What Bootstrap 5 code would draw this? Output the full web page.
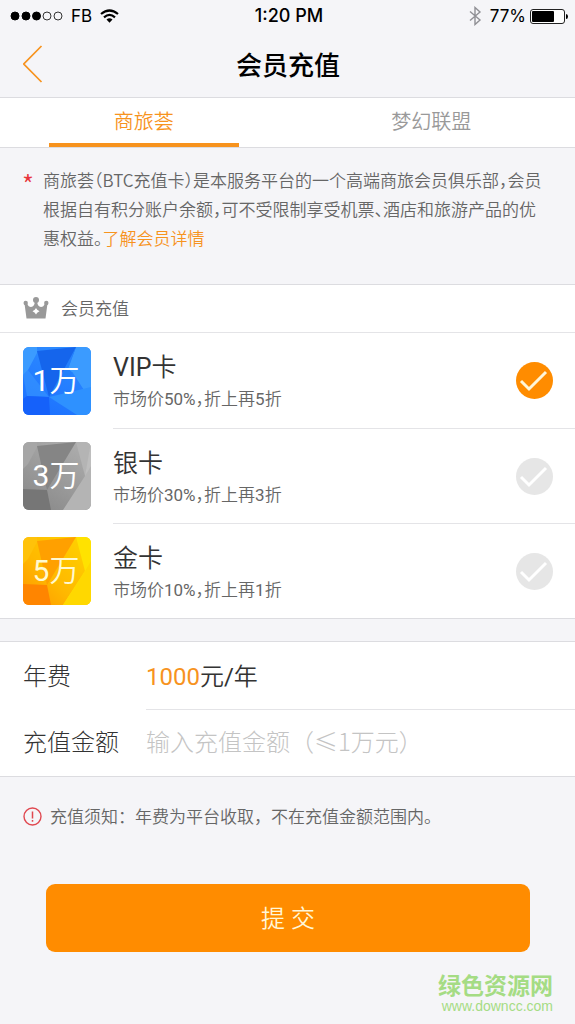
<!DOCTYPE html>
<html lang="zh-CN">
<head>
<meta charset="utf-8">
<meta name="viewport" content="width=device-width, initial-scale=1">
<title>会员充值</title>
<link href="https://cdn.jsdelivr.net/npm/bootstrap@5.3.0/dist/css/bootstrap.min.css" rel="stylesheet">
<style>
  :root { --accent: #ff8c00; --rule: #dcdce0; }
  body { background: #f5f5f8; color: #333; font-family: Roboto, "Noto Sans CJK SC", sans-serif; }
  .cjk { font-family: "Noto Sans CJK SC", sans-serif; }
  .light { font-weight: 300; }
  .demi { font-weight: 350; }
  .latin { font-weight: 400; }
  .half { font-feature-settings: "halt"; }
  .accent, .accent:hover { color: #f7931e; }
  .gutter { padding-left: 23px; padding-right: 22px; }

  .status-bar { height: 32px; padding: 0 7px 0 10px; color: #000; font: 400 17px/32px Inter, sans-serif; }
  .status-bar .carrier, .status-bar .power { flex: 1 1 0; }
  .status-bar .clock { font-size: 18px; font-weight: 500; }
  .title-bar { height: 66px; padding-bottom: 2px; border-bottom: 1px solid var(--rule); }
  .title-bar h1 { font-size: 26px; line-height: 40px; font-weight: 500; color: #000; }
  .side { width: 24px; }

  .tabs { background: #fff; border-bottom: 1px solid var(--rule); }
  .tabs .nav-link { height: 49px; padding: 0; font-size: 20px; line-height: 46px; color: #999; border-radius: 0; }
  .tabs .nav-link.active { color: #f7931e; background: linear-gradient(#f7931e, #f7931e) center bottom / 66% 4px no-repeat; }

  .intro { padding: 17px 28px 32px 22px; font-size: 17px; line-height: 29px; color: #666; }
  .intro .star { width: 21px; flex: none; color: #e8343c; font-size: 26px; line-height: 38px; }

  .panel { background: #fff; border-top: 1px solid var(--rule); border-bottom: 1px solid var(--rule); }
  .panel-head { height: 48px; padding-bottom: 2px; font-size: 17px; color: #666; border-bottom: 1px solid #e4e4e7; }
  .plan { height: 95px; padding-left: 23px; cursor: pointer; }
  .tile { width: 68px; height: 68px; flex: none; }
  .plan-body { margin-left: 22px; padding-right: 22px; }
  .plan + .plan .plan-body { border-top: 1px solid #e4e4e7; }
  .plan-name { padding-top: 2px; font-size: 25px; line-height: 36px; }
  .plan-note { font-size: 17px; line-height: 27px; color: #666; }
  .pick.form-check-input { width: 37px; height: 37px; margin: 0; border: 0; background-color: #e6e6e6; background-size: 100% 100%;
    background-image: url("data:image/svg+xml,%3Csvg xmlns='http://www.w3.org/2000/svg' viewBox='0 0 37 37'%3E%3Cpath d='M5 19l8 8L30 10' fill='none' stroke='%23fff' stroke-width='3'/%3E%3C/svg%3E"); }
  .pick.form-check-input:checked { background-color: var(--accent);
    background-image: url("data:image/svg+xml,%3Csvg xmlns='http://www.w3.org/2000/svg' viewBox='0 0 37 37'%3E%3Cpath d='M5 19l8 8L30 10' fill='none' stroke='%23fff6d8' stroke-width='3'/%3E%3C/svg%3E"); }

  .fees { margin-top: 22px; font-size: 24px; }
  .fee-row { height: 67px; padding-left: 23px; }
  .fee-row:first-child { padding-top: 2px; }
  .fee-label { width: 123px; flex: none; }
  .fee-row + .fee-row .fee-value { border-top: 1px solid #e4e4e7; }
  .fee-input.form-control { padding: 0 0 4px; border: 0; border-radius: 0; box-shadow: none; background: none; font-size: 24px; line-height: 36px; color: #333; }
  .fee-input.form-control::placeholder { color: #c4c4c4; opacity: 1; }

  .notice { padding-top: 24px; padding-bottom: 1px; font-size: 17px; line-height: 30px; color: #666; }
  .submit-wrap { padding: 52px 45px 0 46px; }
  .submit.btn { height: 68px; padding-top: 8px; border: 0; border-radius: 9px; background: var(--accent); color: #fff6d8; font-size: 24px; }
  .brand { padding: 17px 22px 0; color: #a5dc84; }
  .brand-name { font-size: 23px; line-height: 30px; font-weight: 700; }
  .brand-site { font: 14px/14px "Liberation Sans", sans-serif; color: #a5dc84; }
</style>
</head>
<body>
<header>
  <div class="status-bar d-flex align-items-center">
    <div class="carrier d-flex align-items-center">
      <svg width="53" height="10" viewBox="0 0 53 10" aria-hidden="true">
        <g stroke="#000"><circle cx="5" cy="5" r="4"/><circle cx="16" cy="5" r="4"/><circle cx="26.500" cy="5" r="4"/></g>
        <g fill="none" stroke="#333"><circle cx="37" cy="5" r="4"/><circle cx="48" cy="5" r="4"/></g>
      </svg>
      <span class="ms-1 ps-1">FB</span>
      <svg width="19" height="14" viewBox="0 0 19 14" class="ms-2" aria-hidden="true">
        <g fill="none" stroke="#000" stroke-width="2.200"><path d="M1 5Q9.500-2 18 5"/><path d="M4 8.300Q9.500 3.500 15 8.300"/></g>
        <path d="M6.500 10.500Q9.500 8 12.500 10.500L9.500 13.800z"/>
      </svg>
    </div>
    <span class="clock">1:20 PM</span>
    <div class="power d-flex align-items-center justify-content-end">
      <svg width="13" height="20" viewBox="0 0 13 20" class="me-2" aria-hidden="true"><path d="M1 5.500l10 8.500-5 4.500V1.500L11 6 1 14.500" fill="none" stroke="#909095" stroke-width="1.400"/></svg>
      <span>77%</span>
      <svg width="38" height="15" viewBox="0 0 38 15" class="ms-1" aria-hidden="true"><rect x=".5" y=".5" width="34" height="14" rx="2.500" fill="#fff" stroke="#222"/><rect x="2" y="2" width="22" height="11" rx="1"/><path d="M36 5q2 0 2 2.500T36 10z"/></svg>
    </div>
  </div>
  <div class="title-bar gutter d-flex align-items-center justify-content-between">
    <a href="#" class="side d-flex" aria-label="返回"><svg width="20" height="38" viewBox="0 0 20 38"><path d="M18.500 1L.8 19l17.700 18" fill="none" stroke="#f7931e" stroke-width="1.700"/></svg></a>
    <h1 class="cjk m-0">会员充值</h1>
    <span class="side"></span>
  </div>
</header>

<nav class="tabs nav nav-fill nav-justified cjk demi">
  <a class="nav-link active" aria-current="page" href="#">商旅荟</a>
  <a class="nav-link" href="#">梦幻联盟</a>
</nav>

<main>
  <section class="intro cjk demi d-flex">
    <span class="star">*</span>
    <p class="half m-0">商旅荟（BTC充值卡）是本服务平台的一个高端商旅会员俱乐部，会员根据自有积分账户余额，可不受限制享受机票、酒店和旅游产品的优惠权益。<a href="#" class="accent text-decoration-none">了解会员详情</a></p>
  </section>

  <form>
    <section class="panel">
      <div class="panel-head gutter d-flex align-items-center cjk demi">
        <svg width="26" height="22" viewBox="0 0 26 22" aria-hidden="true">
          <g fill="#999"><circle cx="2.700" cy="6" r="2.200"/><circle cx="23.300" cy="6" r="2.200"/><circle cx="13" cy="3" r="3"/>
          <path fill-rule="evenodd" d="M1.500 6.500L4 6.500q1.500 3.500 4 3.500Q11.500 9.500 11.800 5h2.400q.3 4.500 3.800 5 2.500 0 4-3.500l2.500 0L22.500 21.500h-19zM13 11l-1.200 1.800L9.500 14.300l2.300 1.500L13 17.600l1.200-1.800 2.300-1.500-2.300-1.500z"/></g>
        </svg>
        <span class="ms-2 ps-1">会员充值</span>
      </div>

      <label class="plan d-flex align-items-center" for="plan-vip">
        <svg class="tile" viewBox="0 0 68 68">
          <defs>
            <clipPath id="tile-shape"><rect width="68" height="68" rx="6"/></clipPath>
            <linearGradient id="blue" x1=".7" y1="0" x2=".3" y2="1"><stop stop-color="#2d8cff"/><stop offset="1" stop-color="#1d72ff"/></linearGradient>
            <linearGradient id="grey" x1=".8" y1="0" x2=".2" y2="1"><stop stop-color="#adadad"/><stop offset="1" stop-color="#8a8a8a"/></linearGradient>
            <linearGradient id="gold" x1="1" y1="0" x2="0" y2="1"><stop stop-color="#ffd400"/><stop offset=".6" stop-color="#ffb800"/><stop offset="1" stop-color="#ff9500"/></linearGradient>
          </defs>
          <g clip-path="url(#tile-shape)">
            <path fill="url(#blue)" d="M0 0h68v68H0z"/>
            <path fill="#3b9bff" d="M0 0h14v6L5 23 0 28zM53 0h15v54L50 26 45 22z"/>
            <path fill="#1565ec" d="M14 4L53 0 42 26 26 50z"/>
            <path fill="#2580fb" d="M26 50L53 0l-8 22 5 4z"/>
            <path fill="#3c9bff" fill-opacity=".5" d="M0 28l5-5 21 27L4 49z"/>
            <path fill="#1561fa" d="M4 49l22 1 1 18H0V52z"/>
            <path fill="#2e91ff" d="M26 50l42-10v28H54z"/>
          </g>
          <text class="demi" x="33" y="44" font-size="30" fill="#fff" text-anchor="middle"><tspan class="latin">1</tspan>万</text>
        </svg>
        <div class="plan-body d-flex flex-grow-1 align-items-center justify-content-between align-self-stretch">
          <div><div class="plan-name demi"><span class="latin">VIP</span>卡</div><div class="plan-note demi half">市场价<span class="latin">50%</span>，折上再<span class="latin">5</span>折</div></div>
          <input class="pick form-check-input flex-shrink-0" type="radio" name="plan" id="plan-vip" checked>
        </div>
      </label>

      <label class="plan d-flex align-items-center" for="plan-silver">
        <svg class="tile" viewBox="0 0 68 68">
          <g clip-path="url(#tile-shape)">
            <path fill="url(#grey)" d="M0 0h68v68H0z"/>
            <path fill="#a6a6a6" d="M0 0h14v5L5 22 0 27z"/>
            <path fill="#858585" d="M14 4L53 0 24 48z"/>
            <path fill="#b4b4b4" d="M53 0h15v68H40l22-34z"/>
            <path fill="#c4c4c4" fill-opacity=".6" d="M62 34l6-10V0z"/>
            <path fill="#767676" d="M0 47l24 1 4 20H0z"/>
          </g>
          <text class="demi" x="33" y="44" font-size="30" fill="#fff" text-anchor="middle"><tspan class="latin">3</tspan>万</text>
        </svg>
        <div class="plan-body d-flex flex-grow-1 align-items-center justify-content-between align-self-stretch">
          <div><div class="plan-name demi">银卡</div><div class="plan-note demi half">市场价<span class="latin">30%</span>，折上再<span class="latin">3</span>折</div></div>
          <input class="pick form-check-input flex-shrink-0" type="radio" name="plan" id="plan-silver">
        </div>
      </label>

      <label class="plan d-flex align-items-center" for="plan-gold">
        <svg class="tile" viewBox="0 0 68 68">
          <g clip-path="url(#tile-shape)">
            <path fill="url(#gold)" d="M0 0h68v68H0z"/>
            <path fill="#ffc20a" d="M0 0h14v5L5 22 0 27z"/>
            <path fill="#ffa000" d="M14 4L53 0 24 48z"/>
            <path fill="#ffe200" d="M53 0h15v68H40l22-34z"/>
            <path fill="#ffd800" d="M62 34l6-10v44H40z"/>
            <path fill="#ff8500" d="M0 47l24 1 4 20H0z"/>
          </g>
          <text class="demi" x="33" y="44" font-size="30" fill="#fff9d0" text-anchor="middle"><tspan class="latin">5</tspan>万</text>
        </svg>
        <div class="plan-body d-flex flex-grow-1 align-items-center justify-content-between align-self-stretch">
          <div><div class="plan-name demi">金卡</div><div class="plan-note demi half">市场价<span class="latin">10%</span>，折上再<span class="latin">1</span>折</div></div>
          <input class="pick form-check-input flex-shrink-0" type="radio" name="plan" id="plan-gold">
        </div>
      </label>
    </section>

    <section class="panel fees">
      <div class="fee-row d-flex align-items-center">
        <span class="fee-label light">年费</span>
        <div class="fee-value demi flex-grow-1"><span class="accent latin">1000</span>元<span class="latin">/</span>年</div>
      </div>
      <div class="fee-row d-flex align-items-center">
        <label class="fee-label light" for="amount">充值金额</label>
        <div class="fee-value d-flex flex-grow-1 align-items-center align-self-stretch">
          <input type="text" class="fee-input form-control cjk light" id="amount" placeholder="输入充值金额（≤1万元）">
        </div>
      </div>
    </section>

    <div class="notice gutter d-flex align-items-center cjk demi">
      <svg width="19" height="19" viewBox="0 0 19 19" class="flex-shrink-0" aria-hidden="true"><circle cx="9.500" cy="9.500" r="8.500" fill="none" stroke="#e04850" stroke-width="1.400"/><path d="M9.500 4.500v7M9.500 13v1.800" stroke="#e04850" stroke-width="1.500"/></svg>
      <span class="ms-2">充值须知：年费为平台收取，不在充值金额范围内。</span>
    </div>

    <div class="submit-wrap"><button type="submit" class="submit btn demi w-100">提 交</button></div>
  </form>
</main>

<footer class="brand text-end">
  <div class="brand-name cjk">绿色资源网</div>
  <a class="brand-site d-block text-decoration-none" href="#">www.downcc.com</a>
</footer>
<script src="https://cdn.jsdelivr.net/npm/bootstrap@5.3.0/dist/js/bootstrap.bundle.min.js"></script>
</body>
</html>
